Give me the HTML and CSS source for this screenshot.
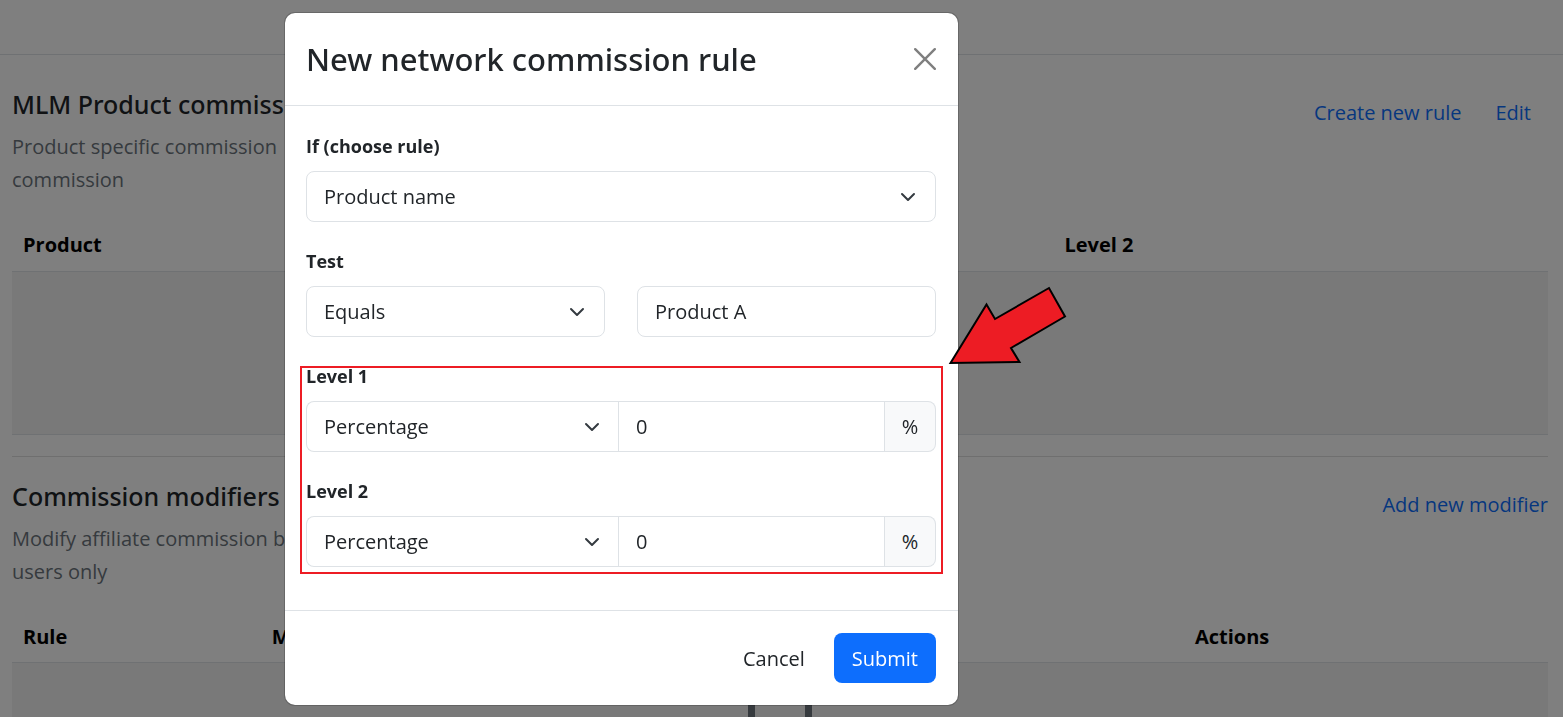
FILE: index.html
```html
<!DOCTYPE html>
<html lang="en">
<head>
<meta charset="utf-8">
<meta name="viewport" content="width=device-width, initial-scale=1">
<title>Network commission rules</title>
<link rel="stylesheet" href="styles.css">
</head>
<body>
<header class="topbar"></header>
<main class="page">
  <section class="section">
    <div class="section-head">
      <div class="section-copy">
        <h2 class="section-title">MLM Product commissions</h2>
        <p class="section-text">Product specific commission<br>commission</p>
      </div>
      <nav class="section-actions">
        <a class="link link-padded" href="#create">Create new rule</a>
        <a class="link link-padded" href="#edit">Edit</a>
      </nav>
    </div>
    <table class="table">
      <colgroup><col class="col-product"><col class="col-level"></colgroup>
      <thead><tr><th scope="col">Product</th><th scope="col">Level 2</th></tr></thead>
      <tbody><tr><td class="empty" colspan="2">
        <svg class="empty-icon" viewBox="0 0 64 80" aria-hidden="true"><path d="M3.5 3.5h57v73h-57z" fill="none" stroke="currentColor" stroke-width="7"/></svg>
      </td></tr></tbody>
    </table>
  </section>
  <section class="section section-ruled">
    <div class="section-head">
      <div class="section-copy">
        <h2 class="section-title">Commission modifiers</h2>
        <p class="section-text">Modify affiliate commission by<br>users only</p>
      </div>
      <nav class="section-actions">
        <a class="link" href="#modifier">Add new modifier</a>
      </nav>
    </div>
    <table class="table">
      <colgroup><col class="col-rule"><col class="col-modifier"><col class="col-actions"></colgroup>
      <thead><tr><th scope="col">Rule</th><th scope="col">Modifier</th><th scope="col">Actions</th></tr></thead>
      <tbody><tr><td class="empty" colspan="3">
        <svg class="empty-icon" viewBox="0 0 64 80" aria-hidden="true"><path d="M3.5 3.5h57v73h-57z" fill="none" stroke="currentColor" stroke-width="7"/></svg>
      </td></tr></tbody>
    </table>
  </section>
</main>

<div class="backdrop">
  <form class="modal" role="dialog" aria-labelledby="modal-title">
    <div class="modal-header">
      <h1 class="modal-title" id="modal-title">New network commission rule</h1>
      <button class="close" type="button" aria-label="Close">
        <svg class="close-icon" viewBox="0 0 22 22" aria-hidden="true"><path d="M1.2 1.2l19.6 19.6M20.8 1.2L1.2 20.8" fill="none" stroke="currentColor" stroke-width="2.4" stroke-linecap="round"/></svg>
      </button>
    </div>
    <div class="modal-body">
      <div class="field">
        <label class="label" for="rule">If (choose rule)</label>
        <select class="control select" id="rule"><option>Product name</option></select>
      </div>
      <div class="field">
        <label class="label" for="test">Test</label>
        <div class="pair">
          <select class="control select" id="test"><option>Equals</option></select>
          <input class="control" type="text" value="Product A" aria-label="Test value">
        </div>
      </div>
      <div class="levels">
        <div class="field">
          <label class="label" for="level1">Level 1</label>
          <div class="group">
            <select class="control select" id="level1"><option>Percentage</option></select>
            <input class="control" type="text" value="0" aria-label="Level 1 amount">
            <span class="addon">%</span>
          </div>
        </div>
        <div class="field">
          <label class="label" for="level2">Level 2</label>
          <div class="group">
            <select class="control select" id="level2"><option>Percentage</option></select>
            <input class="control" type="text" value="0" aria-label="Level 2 amount">
            <span class="addon">%</span>
          </div>
        </div>
        <div class="highlight"></div>
        <svg class="arrow" viewBox="0 0 126 88" aria-hidden="true"><path d="M6.500 81L42.500 22.500L51 37L105 6L121 34.500L67 66L75.500 80z" fill="#ed1c24" stroke="#000" stroke-width="2"/></svg>
      </div>
    </div>
    <div class="modal-footer">
      <button class="button" type="button">Cancel</button>
      <button class="button button-primary" type="submit">Submit</button>
    </div>
  </form>
</div>
</body>
</html>
```
FILE: styles.css
```css
*, *::before, *::after { box-sizing: border-box; }

body {
  margin: 0;
  height: 100vh;
  overflow: hidden;
  background: #fff;
  color: #212529;
  font: 400 20px/33px "Open Sans", "Noto Sans", sans-serif;
}

h1, h2, p { margin: 0; }
input, select, button { font: inherit; color: inherit; }

/* Page */
.topbar { height: 55px; border-bottom: 1px solid #dee2e6; }
.page { padding: 33px 15px 0 12px; }
.section-ruled { margin-top: 21px; padding-top: 23px; border-top: 1px solid #dedede; }
.section-head { display: flex; justify-content: space-between; }
.section-title {
  margin-bottom: 9px;
  font-family: "Noto Sans", "Open Sans", sans-serif;
  font-size: 25px;
  line-height: 33px;
  font-weight: 500;
}
.section-text { color: #6c757d; }
.section-actions { display: flex; padding-top: 8px; }
.link { color: #0d6efd; text-decoration: none; }
.link-padded { padding: 0 17px; }

.table { width: 100%; margin-top: 23px; border-collapse: collapse; table-layout: fixed; }
.table th {
  height: 52px;
  padding: 0 11px;
  border-bottom: 1px solid #dee2e6;
  color: #000;
  font-weight: 700;
  text-align: left;
}
.col-product { width: 67.8%; }
.col-rule { width: 16.2%; }
.col-modifier { width: 60.1%; }
.empty {
  height: 163px;
  padding: 22px 0;
  background: #f2f2f2;
  border-bottom: 1px solid #dee2e6;
  color: #6c757d;
  vertical-align: top;
}
.empty-icon { display: block; width: 64px; margin: 0 auto; }

/* Dialog */
.backdrop {
  position: fixed;
  inset: 0;
  display: flex;
  justify-content: center;
  align-items: flex-start;
  padding: 12px 320px 0 0;
  background: rgba(0, 0, 0, .5);
}
.modal {
  width: 675px;
  border: 1px solid rgba(0, 0, 0, .18);
  border-radius: 11px;
  background: #fff;
  background-clip: padding-box;
}
.modal-header {
  display: flex;
  justify-content: space-between;
  align-items: center;
  padding: 22px 22px 22px 21px;
  border-bottom: 1px solid #dee2e6;
}
.modal-title {
  font-family: "Noto Sans", "Open Sans", sans-serif;
  font-size: 31px;
  line-height: 48px;
  font-weight: 500;
}
.close { display: flex; padding: 0; border: 0; background: none; color: #7f7f7f; }
.close-icon { width: 22px; height: 22px; }
.modal-body { padding: 23px 22px 43px 21px; }
.field, .levels { display: flex; flex-direction: column; }
.modal-body, .levels { display: flex; flex-direction: column; gap: 22px; }
.field { gap: 8px; }
.label { font-size: 18px; line-height: 34px; font-weight: 700; }
.control {
  width: 100%;
  min-width: 0;
  height: 51px;
  padding: 0 17px;
  border: 1px solid #dee2e6;
  border-radius: 8px;
  background-color: #fff;
}
.select {
  appearance: none;
  background-image: url("data:image/svg+xml,%3Csvg xmlns='http://www.w3.org/2000/svg' viewBox='0 0 16 16'%3E%3Cpath fill='none' stroke='%23343a40' stroke-linecap='round' stroke-linejoin='round' stroke-width='2' d='m2 5 6 6 6-6'/%3E%3C/svg%3E");
  background-repeat: no-repeat;
  background-position: right 19px center;
  background-size: 16px 16px;
}
.pair { display: grid; grid-template-columns: 1fr 1fr; gap: 32px; }
.group { display: grid; grid-template-columns: 312px 1fr 51px; }
.group .select { border-radius: 8px 0 0 8px; border-right: 0; background-position: right 18px center; }
.group input { border-radius: 0; }
.addon {
  display: flex;
  align-items: center;
  justify-content: center;
  border: 1px solid #dee2e6;
  border-left: 0;
  border-radius: 0 8px 8px 0;
  background: #f8f9fa;
}

.levels { position: relative; }
.highlight { position: absolute; inset: 7px -7px -7px -6px; border: 2px solid #ed1c24; pointer-events: none; }
.arrow { position: absolute; top: -77px; left: 638px; width: 126px; height: 88px; pointer-events: none; }

.modal-footer {
  display: flex;
  justify-content: flex-end;
  gap: 11px;
  padding: 22px;
  border-top: 1px solid #dee2e6;
}
.button { height: 50px; padding: 0 18px; border: 0; border-radius: 8px; background: none; }
.button-primary { background: #0d6efd; color: #fff; }
```
